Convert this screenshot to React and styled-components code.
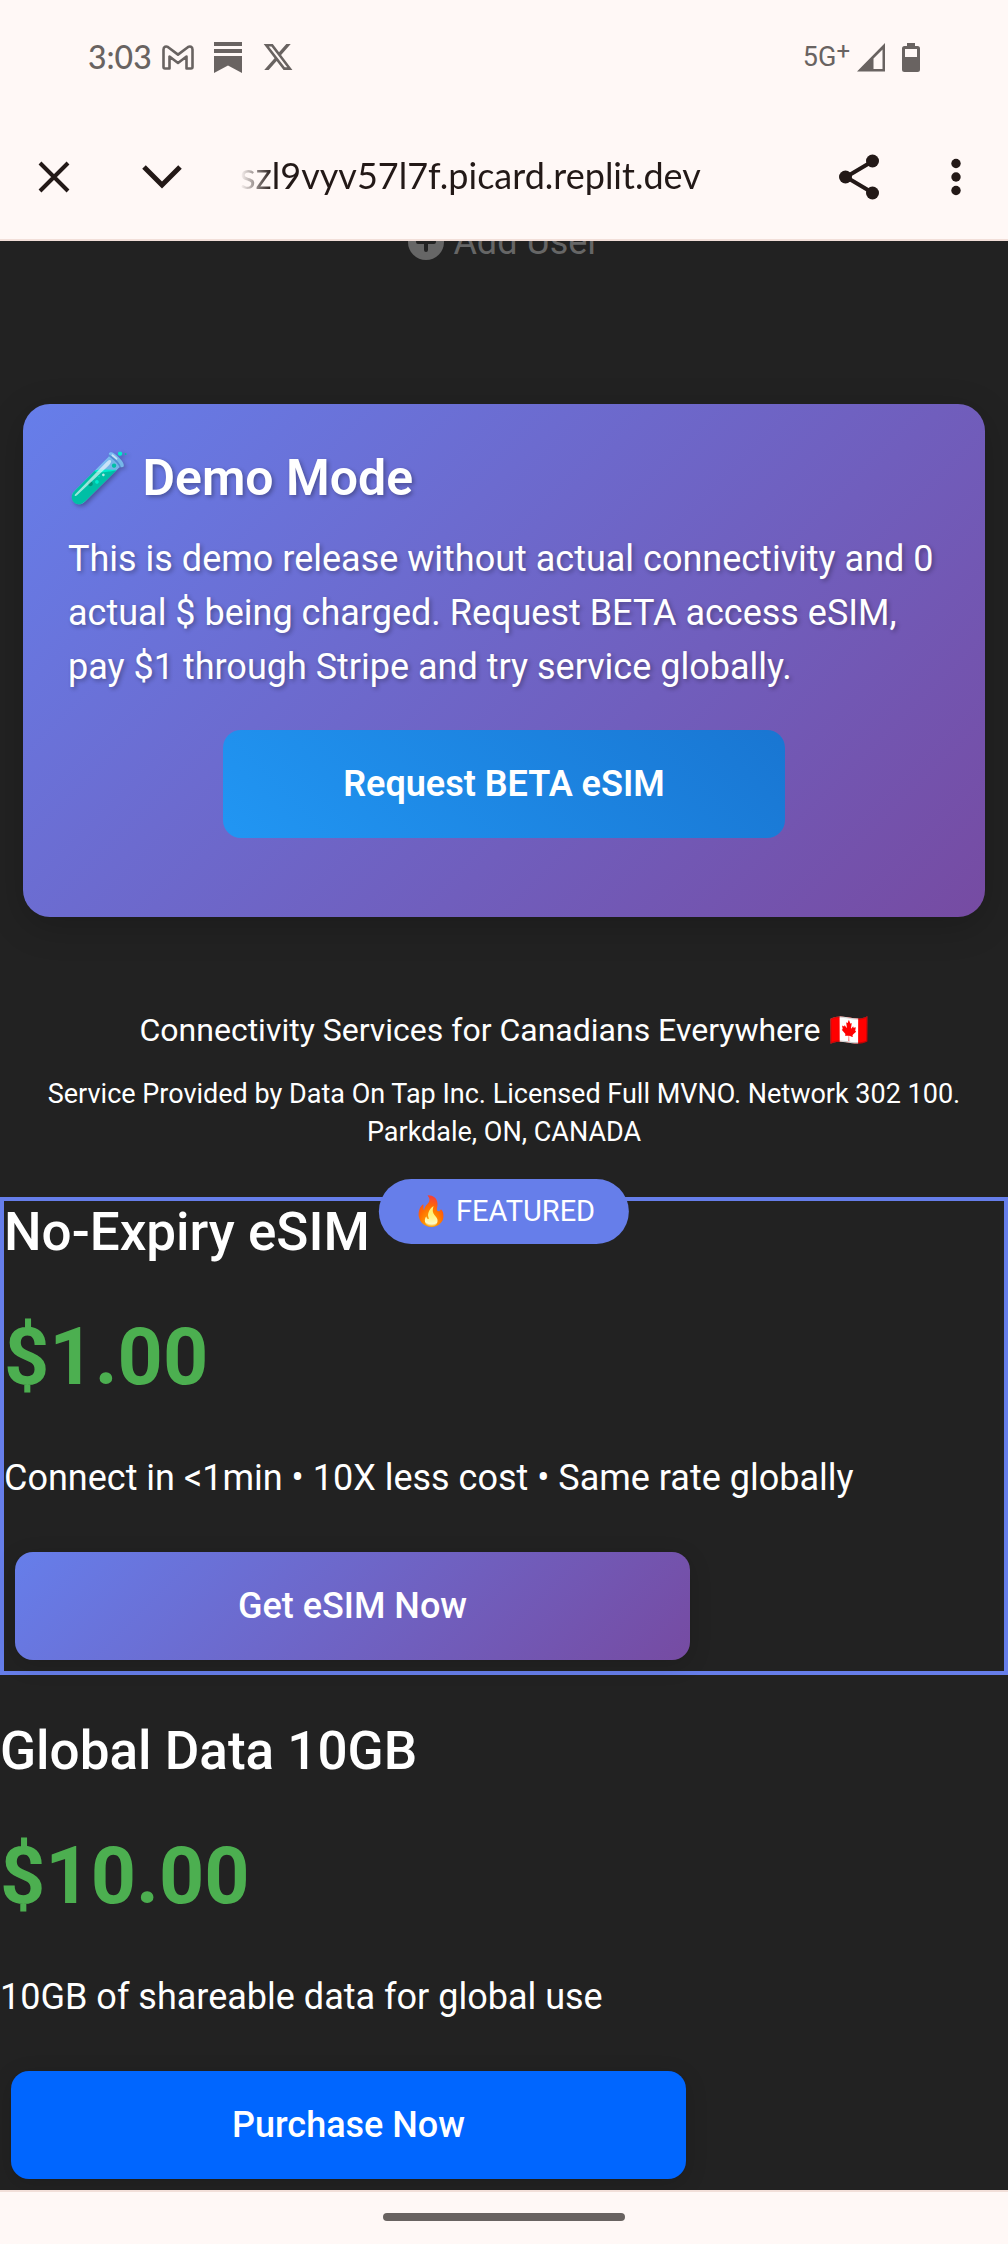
import React from 'react';
import styled, { createGlobalStyle } from 'styled-components';
import { FaXTwitter } from 'react-icons/fa6';

const GlobalStyle = createGlobalStyle`
  * { box-sizing: border-box; }
  body {
    margin: 0;
    background: #222222;
    color: #ffffff;
    font-family: Roboto, "Liberation Sans", sans-serif;
    font-size: 36px;
    line-height: 54px;
  }
  h2, p { margin: 0; }
  button { font-family: inherit; border: 0; padding: 0; cursor: pointer; }
`;

const BrowserHeader = styled.header`
  background: #fff8f6;
  border-bottom: 2px solid #f2dfd9;
  color: #231917;
`;

const StatusBar = styled.div`
  display: flex;
  align-items: center;
  justify-content: space-between;
  height: 114px;
  padding: 0 88px;
  color: #696361;
`;

const StatusGroup = styled.div`
  display: flex;
  align-items: center;
  gap: ${(p) => p.$gap}px;
`;

const Clock = styled.time`
  font-family: Lato, Roboto, sans-serif;
  font-size: 32px;
  font-weight: 500;
  line-height: 40px;
`;

const Network = styled.span`
  display: flex;
  align-items: flex-start;
  font-size: 27px;
  line-height: 36px;
`;

const NetworkPlus = styled.span`
  font-size: 24px;
  line-height: 24px;
`;

const Toolbar = styled.nav`
  display: flex;
  align-items: center;
  height: 125px;
  padding: 0 28px 0 30px;
`;

const IconButton = styled.button`
  display: flex;
  flex: none;
  align-items: center;
  justify-content: center;
  width: 48px;
  height: 48px;
  background: none;
  color: inherit;
`;

const TabControls = styled.div`
  display: flex;
  gap: 60px;
`;

const PageActions = styled.div`
  display: flex;
  gap: 49px;
`;

const Address = styled.div`
  flex: 1;
  min-width: 0;
  margin: 0 54px;
  padding-bottom: 4px;
  overflow: hidden;
  white-space: nowrap;
  font-family: Lato, Roboto, sans-serif;
  font-size: 36px;
  line-height: 54px;
  mask-image: linear-gradient(90deg, transparent, #000 32px);
`;

const Page = styled.main`
  overflow: hidden;
`;

const AddUser = styled.button`
  display: flex;
  align-items: center;
  gap: 9px;
  margin: -26px auto 135px;
  background: none;
  color: #666666;
  font-size: 36px;
  line-height: 54px;
`;

const DemoCard = styled.section`
  margin: 0 23px 90px;
  padding: 45px 45px 43px;
  border-radius: 27px;
  background: linear-gradient(135deg, #667eea 0%, #764ba2 100%);
  box-shadow: 0 9px 36px rgba(0, 0, 0, 0.2);
  text-shadow: 2px 2px 4px rgba(0, 0, 0, 0.3);
`;

const DemoTitle = styled.h2`
  margin-bottom: 25px;
  font-size: 50px;
  font-weight: 600;
  line-height: 58px;
`;

const ActionButton = styled.button`
  display: block;
  width: ${(p) => p.$width}px;
  max-width: 100%;
  height: 108px;
  margin: ${(p) => p.$margin};
  border-radius: 18px;
  background: ${(p) => p.$fill};
  box-shadow: ${(p) => (p.$flat ? 'none' : '0 5px 22px rgba(0, 0, 0, 0.15)')};
  color: #ffffff;
  font-size: 36px;
  font-weight: ${(p) => (p.$flat ? 600 : 500)};
  line-height: 54px;
`;

const Tagline = styled.p`
  margin-bottom: 21px;
  font-size: 32px;
  line-height: 47px;
  text-align: center;
`;

const Provider = styled.p`
  margin: 0 36px 46px;
  font-size: 27px;
  line-height: 38px;
  text-align: center;
`;

const Offer = styled.section`
  position: relative;
  margin-bottom: ${(p) => (p.$featured ? 45 : 0)}px;
  padding-bottom: 11px;
  border: ${(p) => (p.$featured ? '4px solid #667eea' : '0')};
`;

const Badge = styled.span`
  position: absolute;
  top: -22px;
  left: 50%;
  transform: translateX(-50%);
  padding: 11px 34px;
  border-radius: 34px;
  background: #667eea;
  font-size: 29px;
  line-height: 43px;
  white-space: nowrap;
`;

const OfferTitle = styled.h2`
  margin-bottom: 46px;
  font-size: 53px;
  font-weight: 500;
  line-height: 62px;
`;

const Price = styled.p`
  margin-bottom: 46px;
  color: #4caf50;
  font-size: 79px;
  font-weight: 700;
  line-height: 96px;
`;

const SystemBar = styled.footer`
  display: flex;
  justify-content: center;
  height: 54px;
  padding-top: 21px;
  border-top: 2px solid #f2dfd9;
  background: #fff8f6;
`;

const HomeHandle = styled.div`
  width: 242px;
  height: 8px;
  border-radius: 4px;
  background: #696361;
`;

const brand = 'linear-gradient(135deg, #667eea 0%, #764ba2 100%)';

const offers = [
  {
    title: 'No-Expiry eSIM',
    price: '$1.00',
    text: 'Connect in <1min • 10X less cost • Same rate globally',
    action: 'Get eSIM Now',
    fill: brand,
    featured: true,
  },
  {
    title: 'Global Data 10GB',
    price: '$10.00',
    text: '10GB of shareable data for global use',
    action: 'Purchase Now',
    fill: '#0066ff',
    featured: false,
  },
];

const MailIcon = () => (
  <svg width="32" height="25" viewBox="0 0 32 25" fill="none" stroke="currentColor" strokeWidth="2.6" strokeLinejoin="round">
    <path d="M1.5 4.5 C1.5 1.6 4 .8 6.2 2.2 L16 9.6 L25.8 2.2 C28 .8 30.5 1.6 30.5 4.5 V22 Q30.500 23.500 29 23.500 H24.500 V11.500 L16 18 L7.500 11.500 V23.500 H3 Q1.500 23.500 1.500 22 Z" />
  </svg>
);

const BookmarkIcon = () => (
  <svg width="28" height="31" viewBox="0 0 28 31" fill="currentColor">
    <path d="M0 0H28V4H0ZM0 7H28V11H0ZM0 14H28V31L14 23.500L0 31Z" />
  </svg>
);

const SignalIcon = () => (
  <svg width="28" height="29" viewBox="0 0 28 29" fill="currentColor">
    <path fillRule="evenodd" d="M0 28.500L28 0V28.500ZM16.500 26H25.500V6.500L16.500 15.500Z" />
  </svg>
);

const BatteryIcon = () => (
  <svg width="18" height="29" viewBox="0 0 18 29" fill="currentColor">
    <path fillRule="evenodd" d="M5 0H13V3H15.500Q18 3 18 5.500V26.500Q18 29 15.500 29H2.500Q0 29 0 26.500V5.500Q0 3 2.500 3H5ZM3 6V14H15V6Z" />
  </svg>
);

const CloseIcon = () => (
  <svg width="32" height="32" viewBox="0 0 32 32" stroke="currentColor" strokeWidth="4">
    <path d="M2 2L30 30M30 2L2 30" />
  </svg>
);

const ChevronIcon = () => (
  <svg width="40" height="24" viewBox="0 0 40 24" fill="none" stroke="currentColor" strokeWidth="5">
    <path d="M2 2L20 20L38 2" />
  </svg>
);

const ShareIcon = () => (
  <svg width="42" height="46" viewBox="0 0 42 46" fill="currentColor" stroke="currentColor">
    <path d="M35 7L8 23L35 39" fill="none" strokeWidth="4" />
    <circle cx="34.500" cy="7" r="6.500" stroke="none" />
    <circle cx="7.500" cy="23" r="6.500" stroke="none" />
    <circle cx="34.500" cy="39" r="6.500" stroke="none" />
  </svg>
);

const MoreIcon = () => (
  <svg width="10" height="38" viewBox="0 0 10 38" fill="currentColor">
    <circle cx="5" cy="5.500" r="4.700" />
    <circle cx="5" cy="19" r="4.700" />
    <circle cx="5" cy="32.500" r="4.700" />
  </svg>
);

const PlusCircleIcon = () => (
  <svg width="36" height="36" viewBox="0 0 36 36">
    <circle cx="18" cy="18" r="18" fill="currentColor" />
    <path d="M18 10V26M10 18H26" stroke="#222222" strokeWidth="4" strokeLinecap="round" />
  </svg>
);

export default function App() {
  return (
    <>
      <GlobalStyle />
      <BrowserHeader>
        <StatusBar>
          <StatusGroup $gap={20}>
            <StatusGroup $gap={10}>
              <Clock>3:03</Clock>
              <MailIcon />
            </StatusGroup>
            <BookmarkIcon />
            <FaXTwitter size={32} />
          </StatusGroup>
          <StatusGroup $gap={17}>
            <StatusGroup $gap={7}>
              <Network>
                5G<NetworkPlus>+</NetworkPlus>
              </Network>
              <SignalIcon />
            </StatusGroup>
            <BatteryIcon />
          </StatusGroup>
        </StatusBar>
        <Toolbar>
          <TabControls>
            <IconButton aria-label="Close"><CloseIcon /></IconButton>
            <IconButton aria-label="Minimize"><ChevronIcon /></IconButton>
          </TabControls>
          <Address>szl9vyv57l7f.picard.replit.dev</Address>
          <PageActions>
            <IconButton aria-label="Share"><ShareIcon /></IconButton>
            <IconButton aria-label="More"><MoreIcon /></IconButton>
          </PageActions>
        </Toolbar>
      </BrowserHeader>
      <Page>
        <AddUser><PlusCircleIcon />Add User</AddUser>
        <DemoCard>
          <DemoTitle>🧪 Demo Mode</DemoTitle>
          <p>
            This is demo release without actual connectivity and 0 actual $ being charged. Request
            BETA access eSIM, pay $1 through Stripe and try service globally.
          </p>
          <ActionButton $flat $width={562} $margin="36px auto" $fill="linear-gradient(45deg, #2196f3, #1976d2)">
            Request BETA eSIM
          </ActionButton>
        </DemoCard>
        <Tagline>Connectivity Services for Canadians Everywhere 🇨🇦</Tagline>
        <Provider>
          Service Provided by Data On Tap Inc. Licensed Full MVNO. Network 302 100. Parkdale, ON,
          CANADA
        </Provider>
        {offers.map((offer) => (
          <Offer key={offer.title} $featured={offer.featured}>
            {offer.featured && <Badge>🔥 FEATURED</Badge>}
            <OfferTitle>{offer.title}</OfferTitle>
            <Price>{offer.price}</Price>
            <p>{offer.text}</p>
            <ActionButton $width={675} $margin="47px 11px 0" $fill={offer.fill}>
              {offer.action}
            </ActionButton>
          </Offer>
        ))}
      </Page>
      <SystemBar>
        <HomeHandle />
      </SystemBar>
    </>
  );
}
